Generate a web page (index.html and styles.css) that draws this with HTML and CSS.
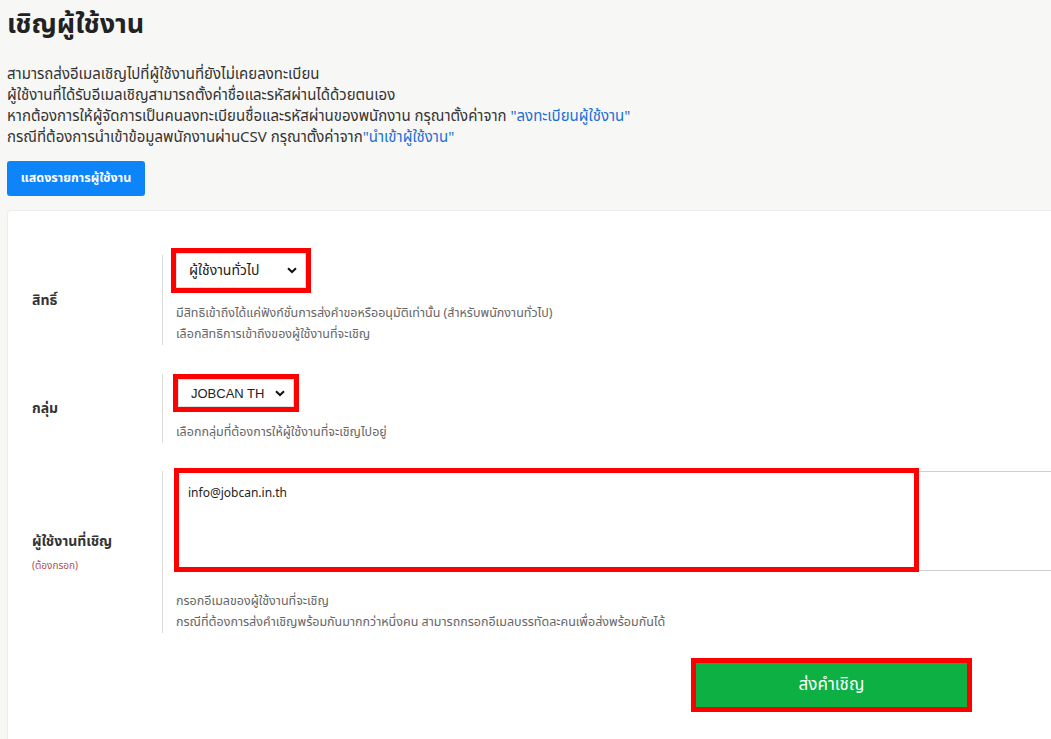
FILE: index.html
```html
<!DOCTYPE html>
<html lang="th">
<head>
<meta charset="utf-8">
<title>เชิญผู้ใช้งาน</title>
<link rel="stylesheet" href="styles.css">
</head>
<body>
<div class="page">
  <h1 class="title">เชิญผู้ใช้งาน</h1>
  <div class="intro">
    <p>สามารถส่งอีเมลเชิญไปที่ผู้ใช้งานที่ยังไม่เคยลงทะเบียน</p>
    <p>ผู้ใช้งานที่ได้รับอีเมลเชิญสามารถตั้งค่าชื่อและรหัสผ่านได้ด้วยตนเอง</p>
    <p>หากต้องการให้ผู้จัดการเป็นคนลงทะเบียนชื่อและรหัสผ่านของพนักงาน กรุณาตั้งค่าจาก <a class="link" href="#">"ลงทะเบียนผู้ใช้งาน"</a></p>
    <p>กรณีที่ต้องการนำเข้าข้อมูลพนักงานผ่านCSV กรุณาตั้งค่าจาก<a class="link" href="#">"นำเข้าผู้ใช้งาน"</a></p>
  </div>
  <button class="btn-list" type="button">แสดงรายการผู้ใช้งาน</button>

  <div class="card">
    <div class="row row-1">
      <div class="label"><span class="label-text">สิทธิ์</span></div>
      <div class="field">
        <div class="select sel-role">
          <span>ผู้ใช้งานทั่วไป</span>
          <svg class="chev" width="10" height="7" viewBox="0 0 10 7"><path d="M1 1.2 L5 5 L9 1.2" fill="none" stroke="#111" stroke-width="2"/></svg>
        </div>
        <div class="help">
          <p>มีสิทธิเข้าถึงได้แค่ฟังก์ชั่นการส่งคำขอหรืออนุมัติเท่านั้น (สำหรับพนักงานทั่วไป)</p>
          <p>เลือกสิทธิการเข้าถึงของผู้ใช้งานที่จะเชิญ</p>
        </div>
      </div>
    </div>

    <div class="row row-2">
      <div class="label"><span class="label-text">กลุ่ม</span></div>
      <div class="field">
        <div class="select sel-group">
          <span class="latin">JOBCAN TH</span>
          <svg class="chev" width="10" height="7" viewBox="0 0 10 7"><path d="M1 1.2 L5 5 L9 1.2" fill="none" stroke="#111" stroke-width="2"/></svg>
        </div>
        <div class="help">
          <p>เลือกกลุ่มที่ต้องการให้ผู้ใช้งานที่จะเชิญไปอยู่</p>
        </div>
      </div>
    </div>

    <div class="row row-3">
      <div class="label">
        <span class="label-text">ผู้ใช้งานที่เชิญ</span>
        <span class="required">(ต้องกรอก)</span>
      </div>
      <div class="field">
        <div class="ta-wrap">
          <div class="textarea">info@jobcan.in.th</div>
          <div class="ta-mark"></div>
        </div>
        <div class="help help-3">
          <p>กรอกอีเมลของผู้ใช้งานที่จะเชิญ</p>
          <p>กรณีที่ต้องการส่งคำเชิญพร้อมกันมากกว่าหนึ่งคน สามารถกรอกอีเมลบรรทัดละคนเพื่อส่งพร้อมกันได้</p>
        </div>
      </div>
    </div>

    <div class="actions">
      <button class="btn-submit" type="button">ส่งคำเชิญ</button>
    </div>
  </div>
</div>
</body>
</html>
```

FILE: styles.css
```css
html, body {
  margin: 0;
  padding: 0;
}
body {
  background: #f7f7f5;
  font-family: Tahoma, "Noto Sans Thai", "Noto Sans", "DejaVu Sans", sans-serif;
  color: #333;
  overflow: hidden;
  width: 1051px;
  height: 739px;
}
.page {
  padding-left: 7px;
  width: 1200px;
}
.title {
  margin: 0;
  padding-top: 8px;
  font-size: 27px;
  line-height: 34px;
  font-weight: bold;
  color: #222;
}
.intro {
  margin-top: 22px;
}
.intro p {
  margin: 0;
  font-size: 15px;
  line-height: 21px;
  color: #333;
}
.link {
  color: #1b6fd6;
  text-decoration: none;
}
.btn-list {
  display: block;
  margin-top: 13px;
  width: 138px;
  height: 35px;
  border: none;
  border-radius: 3px;
  background: #0d84f7;
  color: #fff;
  font-family: inherit;
  font-size: 12.5px;
  font-weight: bold;
  padding: 0;
}
.card {
  margin-top: 14px;
  background: #fff;
  border: 1px solid #ececec;
  border-radius: 4px;
  padding-top: 44px;
  height: 600px;
}
.row {
  display: flex;
  align-items: center;
}
.row-2 { margin-top: 29px; }
.row-3 { margin-top: 28px; }
.label {
  width: 130px;
  padding-left: 24px;
  flex: none;
  display: flex;
  flex-direction: column;
}
.label-text {
  font-size: 14px;
  font-weight: bold;
  color: #333;
}
.required {
  font-size: 10px;
  color: #b54a4a;
  margin-top: 6px;
}
.field {
  flex: 1;
  border-left: 1px solid #dcdcdc;
  padding-left: 13px;
}
.select {
  box-sizing: border-box;
  display: flex;
  align-items: center;
  justify-content: space-between;
  border: 1px solid #ddd;
  background: #fff;
  font-size: 14px;
  color: #222;
  outline: 5px solid #ff0000;
}
.sel-role {
  width: 130px;
  height: 35px;
  padding: 0 8px 0 12px;
  margin-top: -2px;
}
.sel-group {
  width: 116px;
  height: 28px;
  padding: 0 8px 0 12px;
  margin-left: 2px;
  margin-top: 5px;
}
.latin {
  font-family: "Liberation Sans", Arial, sans-serif;
  font-size: 13px;
}
.chev { display: block; }
.help {
  margin-top: 15px;
}
.help p {
  margin: 0;
  font-size: 12.5px;
  line-height: 21px;
  color: #666;
}
.ta-wrap {
  position: relative;
}
.textarea {
  box-sizing: border-box;
  height: 100px;
  border: 1px solid #cfcfcf;
  border-right: none;
  padding: 12px 11px;
  font-size: 12px;
  color: #222;
}
.ta-mark {
  position: absolute;
  left: -2px;
  top: -3px;
  width: 735px;
  height: 94px;
  border: 5px solid #ff0000;
}
.help-3 {
  margin-top: 20px;
}
.actions {
  margin-top: 30px;
  padding-left: 688px;
}
.btn-submit {
  display: block;
  width: 271px;
  height: 44px;
  border: none;
  background: #0db143;
  color: #fff;
  font-family: inherit;
  font-size: 17px;
  padding: 0;
  outline: 5px solid #ff0000;
}
```
